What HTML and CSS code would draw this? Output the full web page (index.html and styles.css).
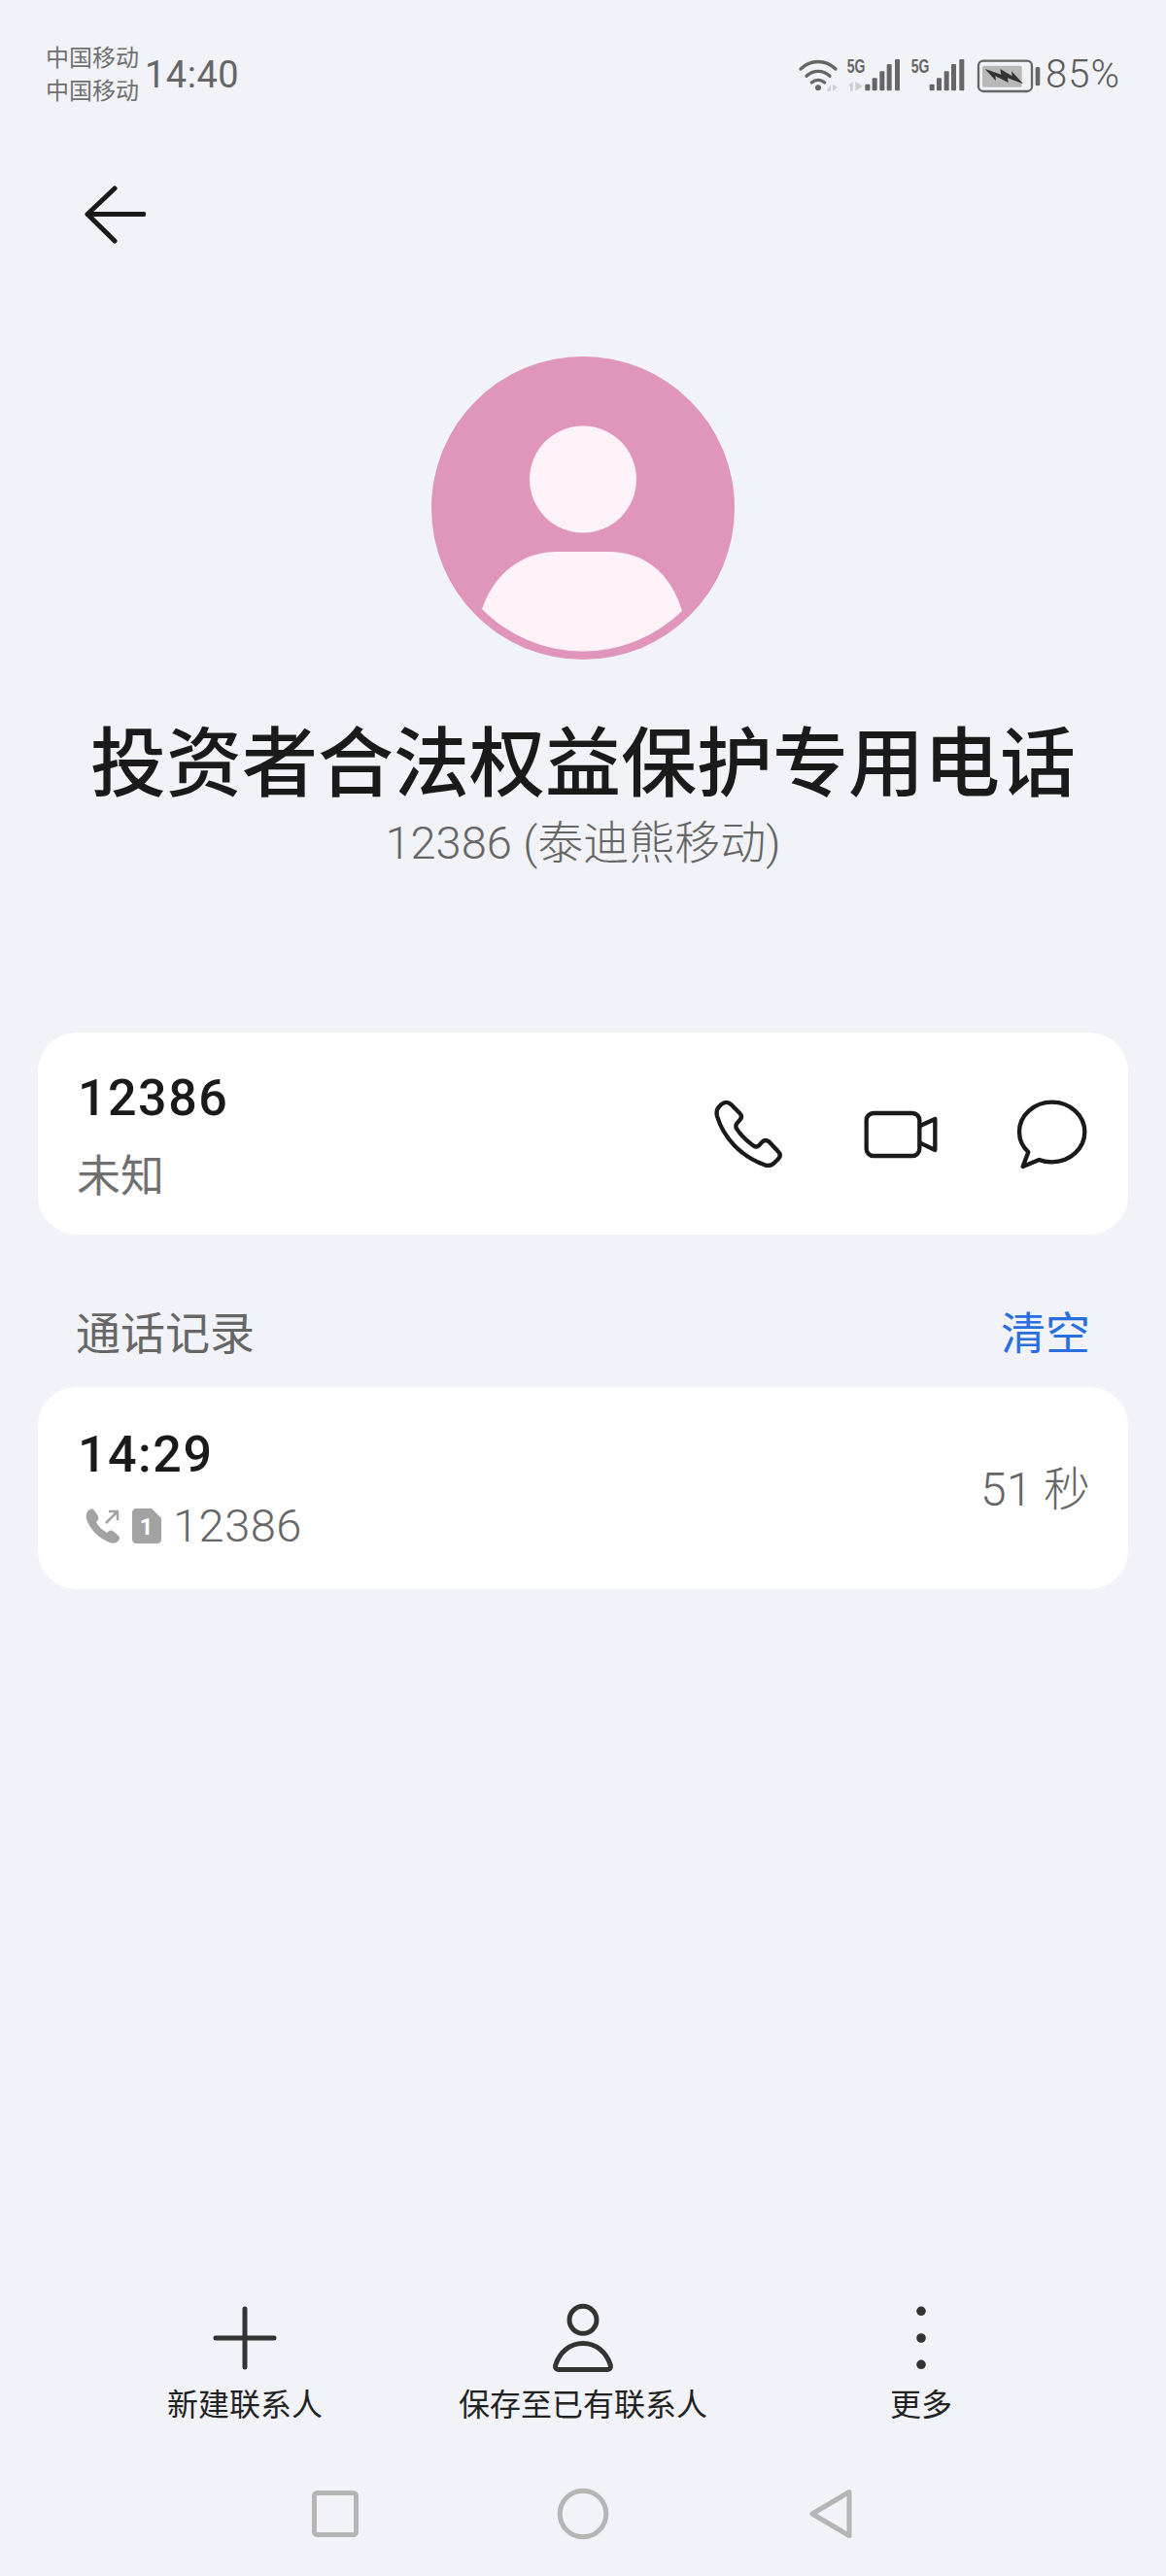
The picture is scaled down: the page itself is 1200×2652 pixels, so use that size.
FILE: index.html
```html
<!DOCTYPE html>
<html lang="zh-CN">
<head>
  <meta charset="UTF-8" />
  <meta name="viewport" content="width=device-width, initial-scale=1.0"/>
  <title>投资者合法权益保护专用电话</title>
  <link rel="stylesheet" href="styles.css">
</head>
<body>
  <header class="status-bar">
    <div class="status-left">
      <div class="carriers">
        <div>中国移动</div>
        <div>中国移动</div>
      </div>
      <span class="clock">14:40</span>
    </div>
    <div class="status-right">
      <svg class="status-icons" viewBox="120 70 750 130">
        <circle class="st-fill" cx="183" cy="176" r="9"/>
        <path class="st-line" d="M129 118 C160 88 206 88 237 118"/>
        <path class="st-line" d="M147 140 C168 120 198 120 219 140"/>
        <path class="st-line" d="M163 160 C175 150 191 150 203 160"/>
        <path class="st-faint" d="M209 186 L222 165 V186 Z M228 165 L243 175 L228 186 Z"/>
        <text class="st-5g" x="272" y="129" textLength="56" lengthAdjust="spacingAndGlyphs">5G</text>
        <path class="st-faint" d="M276 170 L290 156 V186 H282 V170 Z M298 156 L320 172 L298 186 Z"/>
        <rect class="st-fill" x="328" y="165" width="15" height="20" rx="3"/>
        <rect class="st-fill" x="350" y="146" width="15" height="39" rx="3"/>
        <rect class="st-fill" x="373" y="125" width="15" height="60" rx="3"/>
        <rect class="st-fill" x="395" y="103" width="15" height="82" rx="3"/>
        <rect class="st-fill" x="420" y="88" width="15" height="97" rx="3"/>
        <text class="st-5g" x="470" y="129" textLength="56" lengthAdjust="spacingAndGlyphs">5G</text>
        <rect class="st-fill" x="527" y="165" width="15" height="20" rx="3"/>
        <rect class="st-fill" x="549" y="146" width="15" height="39" rx="3"/>
        <rect class="st-fill" x="572" y="125" width="15" height="60" rx="3"/>
        <rect class="st-fill" x="594" y="103" width="15" height="82" rx="3"/>
        <rect class="st-fill" x="619" y="88" width="15" height="97" rx="3"/>
        <rect class="batt-case" x="678" y="93" width="165" height="94" rx="15"/>
        <rect class="batt-level" x="690" y="108" width="122" height="66" rx="5"/>
        <path class="batt-bolt" d="M698 118 L748 135 L745 118 L782 140 L780 125 L816 164 L768 146 L770 160 L730 140 L732 155 Z"/>
        <rect class="st-fill" x="854" y="112" width="14" height="58" rx="5"/>
      </svg>
      <span class="battery-text">85%</span>
    </div>
  </header>

  <a class="back" href="#">
    <svg viewBox="0 0 64 60"><path d="M32 3 L4 29.5 L32 57 M4 29.5 H62"/></svg>
  </a>

  <section class="contact-head">
    <svg class="avatar" viewBox="0 0 312 312">
      <circle class="avatar-bg" cx="156" cy="156" r="156"/>
      <circle class="avatar-fg" cx="156" cy="126.5" r="55"/>
      <path class="avatar-fg" d="M52 260 C65 222 95 201 129 201 H183 C218 201 246 222 258 262 A146 146 0 0 1 52 260 Z"/>
    </svg>
    <h1>投资者合法权益保护专用电话</h1>
    <p>12386 (泰迪熊移动)</p>
  </section>

  <section class="card number-card">
    <div class="number-text">
      <div class="big-num">12386</div>
      <div class="num-type">未知</div>
    </div>
    <div class="actions">
      <svg class="action-phone" viewBox="100 150 225 225"><path d="M128 171 C137 163 150 163 158 171 L184 197 C192 205 192 211 186 218 L176 230 C172 236 172 241 176 247 C190 268 208 285 228 299 C234 303 240 302 245 297 L254 287 C260 281 267 280 275 286 L303 316 C311 324 311 332 304 339 L293 350 C284 359 274 362 262 358 C190 332 135 275 115 207 C112 195 114 185 122 177 Z"/></svg>
      <svg class="action-video" viewBox="560 150 240 225"><rect x="574" y="198" width="164" height="132" rx="22"/><path d="M740 237 L786 216 V312 L740 290"/></svg>
      <svg class="action-msg" viewBox="1035 150 225 225"><path d="M1108 342 C1120 347 1135 349 1148 349 C1204 349 1249 307 1249 256 C1249 205 1204 164 1148 164 C1092 164 1047 205 1047 256 C1047 280 1057 302 1075 318 L1058 363 Z"/></svg>
    </div>
  </section>

  <div class="log-title">
    <span>通话记录</span>
    <a href="#">清空</a>
  </div>

  <section class="card log-card">
    <div>
      <div class="big-num">14:29</div>
      <div class="log-info">
        <svg class="call-icon" viewBox="0 0 36 36">
          <path class="call-phone" d="M3 2 C5 0 8 0 9 2 L13 8 C14 10 13 12 11 14 C13 18 17 22 22 25 C24 23 26 22 28 23 L34 28 C36 30 35 32 33 34 C31 36 28 36 25 35 C14 31 5 22 1 11 C0 7 1 4 3 2 Z"/>
          <path class="call-arrow" d="M21 15 L32 4 M24 3 H33 V12"/>
        </svg>
        <svg class="sim-icon" viewBox="0 0 30 36">
          <path class="sim-body" d="M4 0 H20 L30 10 V32 C30 34 28 36 26 36 H4 C2 36 0 34 0 32 V4 C0 2 2 0 4 0 Z"/>
          <text class="sim-num" x="15" y="27" text-anchor="middle">1</text>
        </svg>
        <span>12386</span>
      </div>
    </div>
    <div class="duration">51 秒</div>
  </section>

  <footer class="bottom">
    <div class="toolbar">
      <div class="tool">
        <svg viewBox="0 0 72 72"><path class="tool-line" d="M36 6 V66 M6 36 H66"/></svg>
        <span>新建联系人</span>
      </div>
      <div class="tool">
        <svg viewBox="0 0 72 72">
          <circle class="tool-line" cx="36" cy="17.3" r="14"/>
          <path class="tool-line" d="M10.5 68.5 H61.5 C63.5 68.5 65 66.5 64.3 64 C60 50 49 41.5 36 41.5 C23 41.5 12 50 7.7 64 C7 66.5 8.5 68.5 10.5 68.5 Z"/>
        </svg>
        <span>保存至已有联系人</span>
      </div>
      <div class="tool">
        <svg viewBox="0 0 72 72">
          <circle class="tool-dot" cx="36" cy="8.3" r="4.8"/>
          <circle class="tool-dot" cx="36" cy="36" r="4.8"/>
          <circle class="tool-dot" cx="36" cy="63.3" r="4.8"/>
        </svg>
        <span>更多</span>
      </div>
    </div>
    <nav class="nav-bar">
      <svg viewBox="0 0 54 54"><rect x="5.5" y="5.5" width="43" height="43" rx="3"/></svg>
      <svg viewBox="0 0 54 54"><circle cx="27" cy="27" r="23.8"/></svg>
      <svg viewBox="0 0 54 54"><path d="M8 27 L46 4.5 V49.5 Z"/></svg>
    </nav>
  </footer>
</body>
</html>
```

FILE: styles.css
```css
body {
  font-family: Roboto, "Noto Sans CJK SC", sans-serif;
  margin: 0;
  height: 2652px;
  display: flex;
  flex-direction: column;
  background: #f1f3f8;
  color: #1a1a1a;
  overflow: hidden;
}

a {
  text-decoration: none;
}

/* status bar */
.status-bar {
  display: flex;
  justify-content: space-between;
  align-items: center;
  height: 67px;
  padding: 43px 47px 0 47px;
  color: #666;
}

.status-left {
  display: flex;
  align-items: center;
}

.carriers {
  font-size: 24px;
  line-height: 34px;
  color: #707070;
}

.clock {
  font-size: 38px;
  letter-spacing: 0.5px;
  margin-left: 6px;
}

.status-right {
  display: flex;
  align-items: center;
}

.status-icons {
  width: 250px;
  height: 43.33px;
}

.battery-text {
  font-size: 40px;
  font-weight: 300;
  letter-spacing: 1px;
  margin-left: 5px;
  color: #5c5c5c;
}

.st-fill {
  fill: #666;
}

.st-line {
  fill: none;
  stroke: #666;
  stroke-width: 10;
  stroke-linecap: round;
}

.st-faint {
  fill: #cfcfcf;
}

.st-5g {
  font-family: "Liberation Sans", sans-serif;
  font-size: 58px;
  font-weight: bold;
  fill: #666;
}

.batt-case {
  fill: none;
  stroke: #666;
  stroke-width: 7;
}

.batt-level {
  fill: #b8b8b8;
}

.batt-bolt {
  fill: #333;
}

/* back arrow */
.back {
  display: block;
  width: 64px;
  height: 60px;
  margin: 81px 0 0 86px;
}

.back svg {
  display: block;
  width: 64px;
  height: 60px;
  fill: none;
  stroke: #1a1a1a;
  stroke-width: 5;
  stroke-linecap: round;
  stroke-linejoin: round;
}

/* contact head */
.contact-head {
  display: flex;
  flex-direction: column;
  align-items: center;
  margin-top: 116px;
}

.avatar {
  width: 312px;
  height: 312px;
}

.avatar-bg {
  fill: #e096bb;
}

.avatar-fg {
  fill: #fcf2f8;
}

.contact-head h1 {
  font-size: 78px;
  line-height: 90px;
  font-weight: 500;
  margin: 64px 0 0;
  white-space: nowrap;
}

.contact-head p {
  font-size: 47px;
  line-height: 60px;
  font-weight: 300;
  color: #666;
  margin: 5px 0 0;
}

/* cards */
.card {
  display: flex;
  justify-content: space-between;
  align-items: center;
  height: 208px;
  box-sizing: border-box;
  margin: 0 39px;
  background: #fff;
  border-radius: 40px;
}

.number-card {
  margin-top: 165px;
  padding: 0 41px 0 44px;
}

.log-card {
  margin-top: 25px;
  padding: 0 39px 0 44px;
}

.number-text {
  padding-top: 6px;
}

.big-num {
  font-size: 52px;
  line-height: 60px;
  font-weight: 500;
  letter-spacing: 1.5px;
  margin-left: -3px;
}

.num-type {
  font-size: 45px;
  line-height: 56px;
  color: #707070;
  margin-top: 23px;
  margin-left: -4px;
}

.actions {
  display: flex;
  align-items: center;
}

.actions svg {
  height: 75px;
  fill: none;
  stroke: #1a1a1a;
  stroke-width: 13;
  stroke-linejoin: round;
}

.action-phone,
.action-msg {
  width: 75px;
}

.action-video {
  width: 80px;
  margin: 0 78px 0 79px;
}

/* call log */
.log-title {
  display: flex;
  justify-content: space-between;
  margin: 72px 39px 0;
  padding: 0 39px 0 39px;
  font-size: 46px;
  line-height: 60px;
  color: #666;
}

.log-title a {
  color: #2a6fe0;
}

.log-info {
  display: flex;
  align-items: center;
  margin-top: 18px;
  font-size: 47px;
  line-height: 50px;
  font-weight: 300;
  letter-spacing: 0.5px;
  color: #666;
}

.call-icon {
  width: 36px;
  height: 36px;
  margin-left: 5px;
}

.call-phone {
  fill: #a3a3a3;
}

.call-arrow {
  fill: none;
  stroke: #a3a3a3;
  stroke-width: 2.5;
}

.sim-icon {
  width: 30px;
  height: 36px;
  margin: 0 12px 0 12px;
}

.sim-body {
  fill: #a3a3a3;
}

.sim-num {
  font-size: 24px;
  font-weight: 700;
  fill: #fff;
}

.duration {
  font-size: 48px;
  font-weight: 300;
  color: #666;
  padding-bottom: 6px;
}

/* bottom toolbar */
.bottom {
  margin-top: auto;
}

.toolbar {
  display: grid;
  grid-template-columns: repeat(3, 348px);
  justify-content: center;
}

.tool {
  display: flex;
  flex-direction: column;
  align-items: center;
  font-size: 32px;
  line-height: 40px;
  color: #222;
}

.tool svg {
  width: 72px;
  height: 72px;
  margin-bottom: 13px;
}

.tool-line {
  fill: none;
  stroke: #333;
  stroke-width: 5;
  stroke-linecap: round;
}

.tool-dot {
  fill: #333;
}

.nav-bar {
  display: flex;
  justify-content: center;
  gap: 201px;
  padding: 65px 0 37px;
}

.nav-bar svg {
  width: 54px;
  height: 54px;
  fill: none;
  stroke: #b5b5b5;
  stroke-width: 5;
  stroke-linejoin: round;
}
```
